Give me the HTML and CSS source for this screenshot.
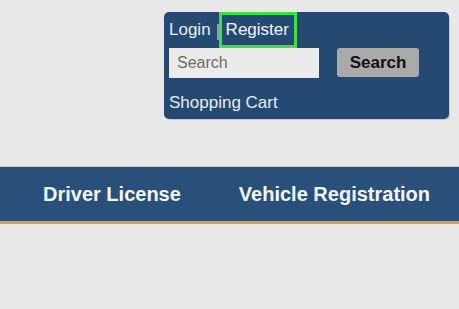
FILE: index.html
```html
<!DOCTYPE html>
<html>
<head>
<meta charset="utf-8">
<link rel="stylesheet" href="styles.css">
</head>
<body>
<header class="top">
  <div class="panel">
    <div class="auth">
      <a class="link">Login</a>
      <span class="sep"></span>
      <a class="link reg">Register</a>
    </div>
    <div class="searchrow">
      <div class="input">Search</div>
      <div class="btn">Search</div>
    </div>
    <a class="link cart">Shopping Cart</a>
  </div>
</header>
<nav class="nav">
  <span class="item">Driver License</span>
  <span class="item">Vehicle Registration</span>
</nav>
</body>
</html>
```
FILE: styles.css
```css
html, body {
  margin: 0;
  padding: 0;
  background: #e8e8e8;
  font-family: "Liberation Sans", Arial, sans-serif;
}
.top {
  padding: 12px 0 0 164px;
}
.panel {
  width: 285px;
  height: 107px;
  box-sizing: border-box;
  background: #244a71;
  border-radius: 5px;
  box-shadow: 1px 1px 0 #c9c9c9;
  padding: 0 0 0 5px;
  display: flex;
  flex-direction: column;
}
.auth {
  display: flex;
  align-items: center;
  height: 36px;
}
.link {
  color: #e6eef7;
  font-size: 17px;
}
.sep {
  width: 2px;
  height: 16px;
  background: #8a9bb0;
  margin: 4px 0 0 6px;
}
.reg {
  color: #f2f6fb;
  border: 3px solid #3ee04a;
  height: 30px;
  line-height: 30px;
  padding: 0 5px 0 4px;
  box-sizing: content-box;
}
.searchrow {
  display: flex;
  align-items: flex-start;
  height: 30px;
}
.input {
  width: 150px;
  height: 30px;
  box-sizing: border-box;
  background: #ebebeb;
  color: #6b6b6b;
  font-size: 16px;
  line-height: 30px;
  padding-left: 8px;
}
.btn {
  margin-left: 18px;
  width: 82px;
  height: 29px;
  box-sizing: border-box;
  background: #aaaaaa;
  border-radius: 3px;
  color: #111;
  font-weight: bold;
  font-size: 17px;
  line-height: 29px;
  text-align: center;
}
.cart {
  margin-top: 15px;
  line-height: 20px;
}
.nav {
  margin-top: 47px;
  height: 54px;
  background: #28507a;
  border-top: 1px solid #c6ccd4;
  border-bottom: 3px solid #d6a13c;
  display: flex;
  align-items: center;
  gap: 58px;
  padding-left: 43px;
  box-sizing: content-box;
}
.item {
  color: #f4f6f9;
  font-weight: bold;
  font-size: 20px;
}
```
